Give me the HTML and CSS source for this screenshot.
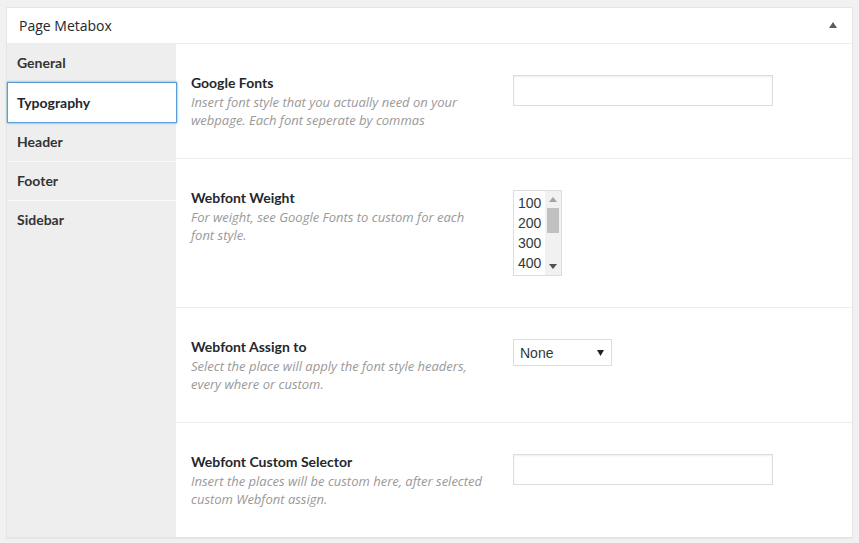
FILE: index.html
```html
<!DOCTYPE html>
<html lang="en">
<head>
    <meta charset="UTF-8">
    <meta name="viewport" content="width=device-width, initial-scale=1.0">
    <title>Page Metabox</title>
    <link rel="stylesheet" href="styles.css">
</head>
<body>
    <div class="postbox">
        <div class="postbox-header">
            <h2 class="postbox-title">Page Metabox</h2>
            <svg class="toggle-arrow" width="8" height="6" viewBox="0 0 8 6">
                <polygon points="4,0 8,6 0,6" fill="#555d66"/>
            </svg>
        </div>

        <div class="metabox-body">
            <ul class="tabs">
                <li class="tab">General</li>
                <li class="tab active">Typography</li>
                <li class="tab">Header</li>
                <li class="tab">Footer</li>
                <li class="tab">Sidebar</li>
            </ul>

            <div class="panel">
                <div class="field-row">
                    <div class="field-label">
                        <label for="google_fonts">Google Fonts</label>
                        <p class="desc">Insert font style that you actually need on your webpage. Each font seperate by commas</p>
                    </div>
                    <div class="field-input">
                        <input type="text" id="google_fonts" class="text-input">
                    </div>
                </div>

                <div class="field-row">
                    <div class="field-label">
                        <label>Webfont Weight</label>
                        <p class="desc">For weight, see Google Fonts to custom for each font style.</p>
                    </div>
                    <div class="field-input">
                        <div class="listbox">
                            <ul class="listbox-options">
                                <li>100</li>
                                <li>200</li>
                                <li>300</li>
                                <li>400</li>
                            </ul>
                            <div class="scrollbar">
                                <svg class="scroll-up" width="8" height="5" viewBox="0 0 8 5">
                                    <polygon points="4,0 8,5 0,5" fill="#a3a3a3"/>
                                </svg>
                                <div class="scroll-thumb"></div>
                                <svg class="scroll-down" width="8" height="5" viewBox="0 0 8 5">
                                    <polygon points="0,0 8,0 4,5" fill="#505050"/>
                                </svg>
                            </div>
                        </div>
                    </div>
                </div>

                <div class="field-row">
                    <div class="field-label">
                        <label>Webfont Assign to</label>
                        <p class="desc">Select the place will apply the font style headers, every where or custom.</p>
                    </div>
                    <div class="field-input">
                        <div class="select-box">
                            <span>None</span>
                            <svg width="7" height="6" viewBox="0 0 7 6">
                                <polygon points="0,0 7,0 3.5,6" fill="#222"/>
                            </svg>
                        </div>
                    </div>
                </div>

                <div class="field-row last">
                    <div class="field-label">
                        <label for="custom_selector">Webfont Custom Selector</label>
                        <p class="desc">Insert the places will be custom here, after selected custom Webfont assign.</p>
                    </div>
                    <div class="field-input">
                        <input type="text" id="custom_selector" class="text-input">
                    </div>
                </div>
            </div>
        </div>
    </div>
</body>
</html>
```

FILE: styles.css
```css
body {
    margin: 0;
    padding: 7px 6px 5px 6px;
    background-color: #f1f1f1;
    font-family: "Open Sans", "Noto Sans", sans-serif;
    color: #23282d;
}
.postbox {
    background-color: #fff;
    border: 1px solid #e5e5e5;
    box-shadow: 0 1px 1px rgba(0, 0, 0, 0.04);
}
.postbox-header {
    display: flex;
    align-items: center;
    justify-content: space-between;
    height: 35px;
    padding: 0 15px 0 12px;
    border-bottom: 1px solid #eee;
}
.postbox-title {
    margin: 0;
    font-size: 14px;
    font-weight: normal;
    line-height: 20px;
}
.toggle-arrow {
    display: block;
    margin-top: -1px;
}
.metabox-body {
    display: flex;
}
.tabs {
    list-style: none;
    margin: 0;
    padding: 0;
    width: 169px;
    flex-shrink: 0;
    background-color: #eee;
}
.tab {
    height: 38px;
    line-height: 38px;
    padding-left: 10px;
    border-bottom: 1px solid #fafafa;
    font-family: Lato, "Open Sans", sans-serif;
    font-size: 14px;
    font-weight: bold;
    color: #333;
}
.tab:last-child {
    border-bottom: none;
}
.tab.active {
    position: relative;
    height: 39px;
    line-height: 39px;
    margin-top: -1px;
    margin-right: -1px;
    padding-left: 9px;
    background-color: #fff;
    border: 1px solid #5b9dd9;
    box-shadow: 0 0 2px rgba(30, 140, 190, 0.8);
    color: #23282d;
}
.panel {
    flex: 1;
    background-color: #fff;
}
.field-row {
    display: flex;
    padding: 29px 15px;
    border-bottom: 1px solid #eee;
}
.field-row.last {
    border-bottom: none;
}
.field-label {
    width: 292px;
    margin-right: 30px;
}
.field-label label {
    display: block;
    font-family: Lato, "Open Sans", sans-serif;
    font-size: 14px;
    font-weight: bold;
    line-height: 20px;
    color: #23282d;
}
.desc {
    margin: 0;
    font-size: 13px;
    font-style: italic;
    line-height: 18px;
    color: #999;
}
.field-input {
    padding: 2px 0;
}
.text-input {
    display: block;
    box-sizing: border-box;
    width: 260px;
    height: 31px;
    margin: 0;
    padding: 3px 5px;
    border: 1px solid #ddd;
    box-shadow: inset 0 1px 2px rgba(0, 0, 0, 0.07);
    background-color: #fff;
    font-family: "Open Sans", sans-serif;
    font-size: 14px;
}
.listbox {
    display: flex;
    width: 47px;
    height: 84px;
    border: 1px solid #ddd;
    background-color: #fff;
}
.listbox-options {
    list-style: none;
    flex: 1;
    margin: 0;
    padding: 2px 0 0 4px;
    font-family: "Liberation Sans", Arial, sans-serif;
    font-size: 14px;
    line-height: 20px;
    color: #32373c;
}
.scrollbar {
    display: flex;
    flex-direction: column;
    align-items: center;
    width: 16px;
    background-color: #f1f1f1;
}
.scroll-up {
    display: block;
    margin-top: 6px;
}
.scroll-thumb {
    width: 12px;
    height: 25px;
    margin-top: 6px;
    background-color: #c1c1c1;
}
.scroll-down {
    display: block;
    margin-top: auto;
    margin-bottom: 6px;
}
.select-box {
    display: flex;
    align-items: center;
    justify-content: space-between;
    box-sizing: border-box;
    width: 99px;
    height: 27px;
    padding: 0 7px 0 6px;
    border: 1px solid #ddd;
    background-color: #fff;
    font-family: "Liberation Sans", Arial, sans-serif;
    font-size: 14px;
    color: #32373c;
}
```
